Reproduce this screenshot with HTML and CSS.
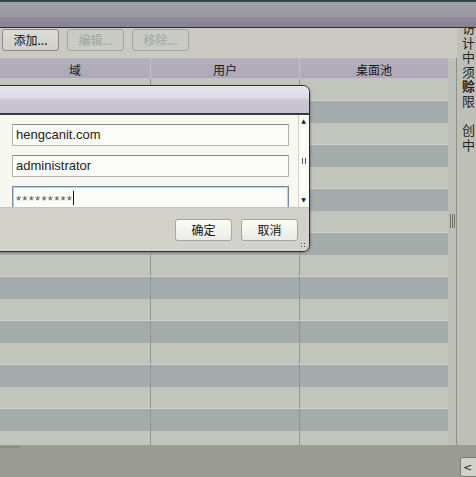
FILE: index.html
```html
<!DOCTYPE html>
<html lang="zh-CN">
<head>
<meta charset="utf-8">
<title>桌面池</title>
<link rel="stylesheet" href="styles.css">
</head>
<body>
<div class="window">
  <div class="titlebar"><div class="tb-top"></div><div class="tb-bottom"></div></div>
  <div class="main">
    <div class="content">
      <div class="toolbar">
        <button class="btn">添加...</button>
        <button class="btn" disabled>编辑...</button>
        <button class="btn" disabled>移除...</button>
      </div>
      <div class="tablewrap">
        <div class="table">
          <div class="thead">
            <div class="th">域</div>
            <div class="th">用户</div>
            <div class="th">桌面池</div>
          </div>
          <div class="tbody">
            <div class="row light"><div></div><div></div><div></div></div>
            <div class="row dark"><div></div><div></div><div></div></div>
            <div class="row light"><div></div><div></div><div></div></div>
            <div class="row dark"><div></div><div></div><div></div></div>
            <div class="row light"><div></div><div></div><div></div></div>
            <div class="row dark"><div></div><div></div><div></div></div>
            <div class="row light"><div></div><div></div><div></div></div>
            <div class="row dark"><div></div><div></div><div></div></div>
            <div class="row light"><div></div><div></div><div></div></div>
            <div class="row dark"><div></div><div></div><div></div></div>
            <div class="row light"><div></div><div></div><div></div></div>
            <div class="row dark"><div></div><div></div><div></div></div>
            <div class="row light"><div></div><div></div><div></div></div>
            <div class="row dark"><div></div><div></div><div></div></div>
            <div class="row light"><div></div><div></div><div></div></div>
            <div class="row dark"><div></div><div></div><div></div></div>
            <div class="row light"><div></div><div></div><div></div></div>
          </div>
        </div>
        <div class="strip"><span class="grip"></span></div>
      </div>
    </div>
    <div class="side">
      <div class="sidetext">访<br>计<br>中<br>须<br><b>赊</b><br>限<br>&nbsp;<br>创<br>中</div>
    </div>
  </div>
  <div class="bottom">
    <div class="bottom-mark"></div>
    <button class="corner">&lt;</button>
  </div>

  <div class="dialog">
    <div class="dlg-title"></div>
    <div class="dlg-body">
      <div class="fields">
        <div class="field">hengcanit.com</div>
        <div class="field">administrator</div>
        <div class="field focus"><span class="pw">*********</span><span class="caret"></span></div>
      </div>
      <div class="vscroll">
        <span class="arrow">&#9650;</span>
        <span class="vgrip"></span>
        <span class="arrow">&#9660;</span>
      </div>
    </div>
    <div class="dlg-foot">
      <button class="dbtn">确定</button>
      <button class="dbtn">取消</button>
      <span class="resize"></span>
    </div>
  </div>
</div>
</body>
</html>
```

FILE: styles.css
```css
* { box-sizing: border-box; }
html, body { margin: 0; padding: 0; }
body {
  width: 476px;
  height: 477px;
  overflow: hidden;
  background: #9b9d95;
  font-family: "Noto Sans CJK SC", "DejaVu Sans", sans-serif;
  font-size: 12px;
  color: #1a1a1a;
}
.window {
  position: relative;
  width: 476px;
  height: 477px;
  display: flex;
  flex-direction: column;
}
.titlebar {
  height: 30px;
  border-top: 2px solid #34443f;
  border-bottom: 1px solid #2e2e30;
  display: flex;
  flex-direction: column;
}
.tb-top { height: 15px; background: linear-gradient(#a2a1aa, #9a99a2); }
.tb-bottom { flex: 1; background: linear-gradient(#8f8b9a, #878394); }

.main {
  height: 417px;
  display: flex;
}
.content {
  width: 457px;
  display: flex;
  flex-direction: column;
}
.toolbar {
  height: 30px;
  background: #cacac2;
  display: flex;
  gap: 8px;
  padding: 1px 0 0 2px;
  align-items: flex-start;
}
.btn {
  width: 57px;
  height: 22px;
  padding: 0;
  font-family: "Noto Sans CJK SC", sans-serif;
  font-size: 12px;
  line-height: 20px;
  color: #111;
  background: linear-gradient(#dcdcd4, #d0d0c8);
  border: 1px solid #8c8c86;
  border-radius: 3px;
}
.btn:disabled {
  color: #a0a49f;
  background: #c8ccc4;
  border-color: #a2a6a0;
}
.tablewrap {
  flex: 1;
  display: flex;
  overflow: hidden;
}
.table {
  width: 448px;
  display: flex;
  flex-direction: column;
}
.thead {
  height: 21px;
  flex: none;
  display: grid;
  grid-template-columns: 151px 149px 148px;
  background: linear-gradient(#b4b0bd, #aca8b6);
  border-bottom: 1px solid #c2c0c6;
}
.th {
  text-align: center;
  line-height: 20px;
  padding-top: 2px;
  font-size: 12px;
  color: #1a1a1a;
  border-right: 1px solid #c4c2cb;
}
.th:last-child { border-right: none; }
.tbody { display: flex; flex-direction: column; }
.row {
  height: 22px;
  flex: none;
  display: grid;
  grid-template-columns: 151px 149px 148px;
}
.row > div { border-right: 1px solid #8e9694; }
.row > div:last-child { border-right: none; }
.row.light { background: #c2c5bb; border-bottom: 1px solid #cdd1c9; }
.row.dark { background: #a4adab; }
.strip {
  width: 9px;
  background: #bcc0b8;
  border-right: 1px solid #8d8f89;
  display: flex;
  flex-direction: column;
  align-items: center;
  padding-top: 156px;
}
.grip {
  width: 5px;
  height: 14px;
  background: repeating-linear-gradient(90deg, #6e726e 0 1px, transparent 1px 2px);
}
.side {
  flex: 1;
  background: #bebfb7;
  overflow: hidden;
}
.sidetext {
  margin-top: -7px;
  padding-left: 5px;
  font-size: 13px;
  line-height: 14.6px;
  color: #222;
  white-space: nowrap;
}
.sidetext b { font-weight: 700; }

.bottom {
  flex: 1;
  background: #9b9d95;
  display: flex;
  justify-content: space-between;
  align-items: flex-start;
}
.bottom-mark {
  width: 20px;
  height: 2px;
  margin-top: 1px;
  background: #8a8c86;
}
.corner {
  width: 20px;
  height: 20px;
  margin-top: 12px;
  margin-right: -4px;
  padding: 0 0 0 2px;
  text-align: left;
  font-family: "DejaVu Sans", sans-serif;
  font-size: 11px;
  color: #222;
  background: #d2d2ca;
  border: 1px solid #7a7c76;
  border-radius: 3px;
}

/* dialog overlay */
.dialog {
  position: absolute;
  left: -2px;
  top: 85px;
  width: 312px;
  height: 167px;
  border: 1px solid #2e2e2e;
  border-radius: 0 7px 7px 0;
  overflow: hidden;
  display: flex;
  flex-direction: column;
  box-shadow: 1px 1px 2px rgba(0,0,0,0.25);
}
.dlg-title {
  height: 29px;
  flex: none;
  background: linear-gradient(#e6e4ea 0, #dedbe4 45%, #cdc6d6 52%, #c7c0d1 100%);
  border-bottom: 2px solid #3a3a3c;
}
.dlg-body {
  height: 92px;
  flex: none;
  display: flex;
  background: #f8f8f3;
  overflow: hidden;
}
.fields {
  width: 299px;
  padding: 9px 9px 0 13px;
  display: flex;
  flex-direction: column;
  gap: 9px;
}
.field {
  height: 22px;
  flex: none;
  border: 1px solid #b4b4ac;
  border-top-color: #8c8c86;
  background: #fcfcf8;
  padding: 0 3px;
  font-family: "Liberation Sans", sans-serif;
  font-size: 13px;
  line-height: 20px;
  color: #222;
  display: flex;
  align-items: center;
}
.field.focus {
  height: 24px;
  border: 1px solid #6f8ca8;
  box-shadow: inset 0 0 0 1px #b8d0e6;
  align-items: flex-start;
  padding-top: 4px;
}
.pw {
  font-size: 13px;
  letter-spacing: 1.3px;
  color: #555;
  line-height: 13px;
  margin-top: 3px;
}
.caret {
  width: 1px;
  height: 14px;
  background: #111;
}
.vscroll {
  width: 10px;
  background: #fbfbf7;
  border-left: 1px solid #d4d4ce;
  display: flex;
  flex-direction: column;
  align-items: center;
  justify-content: space-between;
  padding: 1px 0 2px;
}
.arrow {
  font-size: 6px;
  line-height: 10px;
  color: #222;
  font-family: "DejaVu Sans", sans-serif;
}
.vgrip {
  width: 5px;
  height: 6px;
  background:
    radial-gradient(circle, #555 0.8px, transparent 1px) 0 0 / 3px 2px;
}
.dlg-foot {
  flex: 1;
  background: #d2d2ca;
  border-top: 1px solid #c4c4bc;
  display: flex;
  justify-content: flex-end;
  align-items: flex-start;
  gap: 9px;
  padding: 11px 11px 0 0;
  position: relative;
}
.dbtn {
  width: 57px;
  height: 22px;
  padding: 0;
  font-family: "Noto Sans CJK SC", sans-serif;
  font-size: 12px;
  line-height: 20px;
  color: #111;
  background: linear-gradient(#fbfbf8, #ecece6);
  border: 1px solid #a6a6a0;
  border-radius: 3px;
}
.resize {
  position: absolute;
  right: 2px;
  bottom: 2px;
  width: 7px;
  height: 7px;
  background: radial-gradient(circle, #444 0.8px, transparent 1px) 0 0 / 3px 3px;
}
```
